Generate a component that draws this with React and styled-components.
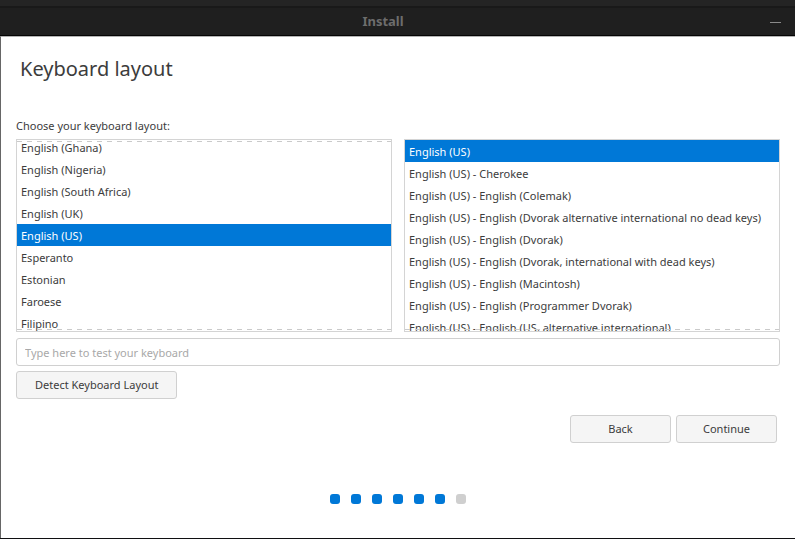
import React, { useLayoutEffect, useRef, useState } from "react";
import styled, { createGlobalStyle } from "styled-components";

const GlobalStyle = createGlobalStyle`
  * { box-sizing: border-box; }
  body {
    margin: 0;
    background: #ffffff;
    color: #3c3c3c;
    font-family: "Noto Sans", sans-serif;
    font-size: 11px;
    line-height: 16px;
  }
  button, input { font: inherit; color: inherit; }
`;

const Window = styled.div`
  display: flex;
  flex-direction: column;
  min-height: 100vh;
  border-bottom: 1px solid #101012;
`;

const TitleBar = styled.header`
  display: grid;
  grid-template-columns: 40px 1fr 40px;
  align-items: center;
  height: 36px;
  padding-top: 7px;
  border-bottom: 1px solid #050505;
  background: linear-gradient(#242424 6px, #191919 6px, #191919 8px, #1f1f1f 8px);
`;

const WindowTitle = styled.span`
  grid-column: 2;
  padding-right: 29px;
  text-align: center;
  font-size: 13px;
  font-weight: 700;
  color: #6d6d6d;
`;

const MinimizeButton = styled.button`
  display: flex;
  align-items: center;
  justify-content: center;
  height: 24px;
  padding: 0;
  border: 0;
  background: none;
  color: #8a8a8a;
`;

const Content = styled.main`
  flex: 1;
  padding: 17px 15px 0;
  border-top: 1px solid #b4b4b4;
  border-left: 1px solid #666666;
`;

const Heading = styled.h1`
  margin: 0 4px 34px;
  font-size: 20px;
  line-height: 30px;
  font-weight: 400;
`;

const Label = styled.p`
  margin: 0 0 5px;
`;

const Lists = styled.div`
  display: grid;
  grid-template-columns: 1fr 1fr;
  gap: 12px;
`;

const ListFrame = styled.div`
  position: relative;
  min-width: 0;
  border: 1px solid #d4d4d4;
`;

const ListBox = styled.ul`
  height: 191px;
  margin: 0;
  padding: 0;
  overflow: hidden;
  list-style: none;
  white-space: nowrap;
`;

const Option = styled.li`
  height: 22px;
  padding: 0 4px;
  line-height: 24px;
  cursor: default;
  background: ${(p) => (p["aria-selected"] ? "#0078d7" : "transparent")};
  color: ${(p) => (p["aria-selected"] ? "#ffffff" : "inherit")};
`;

const ScrollHint = styled.div`
  position: absolute;
  left: 0;
  right: 0;
  ${(p) => (p.$edge === "top" ? "top: 1px;" : "bottom: 1px;")}
  height: 1px;
  pointer-events: none;
  background: repeating-linear-gradient(90deg, #cacaca 0 5px, transparent 5px 10px);
`;

const TestInput = styled.input`
  display: block;
  width: 100%;
  height: 28px;
  margin: 6px 0 5px;
  padding: 0 8px;
  border: 1px solid #d0d0d0;
  border-radius: 3px;
  background: #ffffff;
  &::placeholder { color: #a8a8a8; opacity: 1; }
`;

const Button = styled.button`
  min-width: 101px;
  height: 28px;
  padding: 0 18px;
  border: 1px solid #d0d0d0;
  border-radius: 3px;
  background: #f5f5f5;
`;

const Actions = styled.div`
  display: flex;
  justify-content: flex-end;
  gap: 5px;
  margin-top: 16px;
  padding-right: 3px;
`;

const Progress = styled.div`
  display: flex;
  justify-content: center;
  gap: 11px;
  margin-top: 51px;
`;

const Dot = styled.span`
  width: 10px;
  height: 10px;
  border-radius: 3px;
  background: ${(p) => (p.$done ? "#0078d7" : "#cfcfcf")};
`;

const layouts = [
  "English (Ghana)",
  "English (Nigeria)",
  "English (South Africa)",
  "English (UK)",
  "English (US)",
  "Esperanto",
  "Estonian",
  "Faroese",
  "Filipino",
];

const variants = [
  "English (US)",
  "English (US) - Cherokee",
  "English (US) - English (Colemak)",
  "English (US) - English (Dvorak alternative international no dead keys)",
  "English (US) - English (Dvorak)",
  "English (US) - English (Dvorak, international with dead keys)",
  "English (US) - English (Macintosh)",
  "English (US) - English (Programmer Dvorak)",
  "English (US) - English (US, alternative international)",
];

function SelectionList({ label, items, initial, scroll = 0 }) {
  const ref = useRef(null);
  const [selected, setSelected] = useState(initial);

  useLayoutEffect(() => {
    ref.current.scrollTop = scroll;
  }, [scroll]);

  return (
    <ListFrame>
      <ListBox ref={ref} role="listbox" aria-label={label} tabIndex={0}>
        {items.map((item) => (
          <Option
            key={item}
            role="option"
            aria-selected={item === selected}
            onClick={() => setSelected(item)}
          >
            {item}
          </Option>
        ))}
      </ListBox>
      {scroll > 0 && <ScrollHint $edge="top" />}
      <ScrollHint $edge="bottom" />
    </ListFrame>
  );
}

export default function App() {
  return (
    <>
      <GlobalStyle />
      <Window>
        <TitleBar>
          <WindowTitle>Install</WindowTitle>
          <MinimizeButton aria-label="Minimize">
            <svg width="11" height="11" viewBox="0 0 11 11" aria-hidden="true">
              <path d="M0 6.5h11" stroke="currentColor" />
            </svg>
          </MinimizeButton>
        </TitleBar>
        <Content>
          <Heading>Keyboard layout</Heading>
          <Label>Choose your keyboard layout:</Label>
          <Lists>
            <SelectionList label="Keyboard layout" items={layouts} initial="English (US)" scroll={4} />
            <SelectionList label="Layout variant" items={variants} initial="English (US)" />
          </Lists>
          <TestInput
            type="text"
            aria-label="Type here to test your keyboard"
            placeholder="Type here to test your keyboard"
          />
          <Button type="button">Detect Keyboard Layout</Button>
          <Actions>
            <Button type="button">Back</Button>
            <Button type="button">Continue</Button>
          </Actions>
          <Progress role="img" aria-label="Step 6 of 7">
            {[1, 2, 3, 4, 5, 6, 7].map((step) => (
              <Dot key={step} $done={step <= 6} />
            ))}
          </Progress>
        </Content>
      </Window>
    </>
  );
}
